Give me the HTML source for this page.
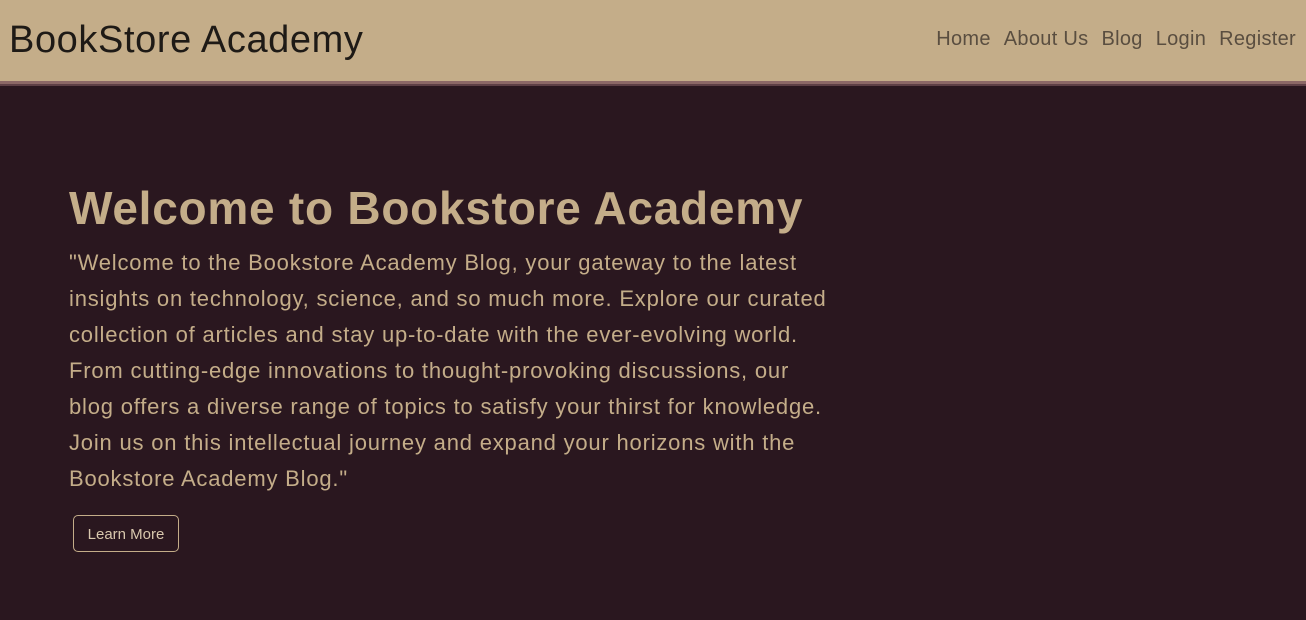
<!DOCTYPE html>
<html><head><style>
html,body{margin:0;padding:0;width:1306px;height:620px;overflow:hidden;background:#2a171f;font-family:"Liberation Sans",sans-serif}
.hdr{position:absolute;left:0;top:0;width:1306px;height:81px;background:#c4ad89}
.bd1{position:absolute;left:0;top:81px;width:1306px;height:3px;background:#8c6866}
.bd2{position:absolute;left:0;top:84px;width:1306px;height:2px;background:#5e4046}
.logo{position:absolute;left:9px;top:19px;font-size:38px;color:#1e1a16;white-space:nowrap;letter-spacing:0.6px}
.nav{position:absolute;right:10px;top:28px;font-size:20px;color:#5a4e40;white-space:nowrap;letter-spacing:0.3px}
.nav span{margin-left:13px}
h1{position:absolute;left:69px;top:181px;margin:0;font-size:46px;font-weight:bold;color:#c4ad89;white-space:nowrap;letter-spacing:0.75px}
.p{position:absolute;left:69px;top:245px;font-size:22px;line-height:36px;color:#c4ad89;white-space:nowrap;letter-spacing:0.8px}
.btn{position:absolute;left:73px;top:515px;width:106px;height:37px;border:1px solid #c4ad89;border-radius:5px;color:#d8c7ad;font-size:15px;line-height:37px;text-align:center;box-sizing:border-box}
</style></head><body>
<div class="hdr"></div><div class="bd1"></div><div class="bd2"></div>
<div class="logo">BookStore Academy</div>
<div class="nav"><span>Home</span><span>About Us</span><span>Blog</span><span>Login</span><span>Register</span></div>
<h1>Welcome to Bookstore Academy</h1>
<div class="p">"Welcome to the Bookstore Academy Blog, your gateway to the latest<br>insights on technology, science, and so much more. Explore our curated<br>collection of articles and stay up-to-date with the ever-evolving world.<br>From cutting-edge innovations to thought-provoking discussions, our<br>blog offers a diverse range of topics to satisfy your thirst for knowledge.<br>Join us on this intellectual journey and expand your horizons with the<br>Bookstore Academy Blog."</div>
<div class="btn">Learn More</div>
</body></html>
